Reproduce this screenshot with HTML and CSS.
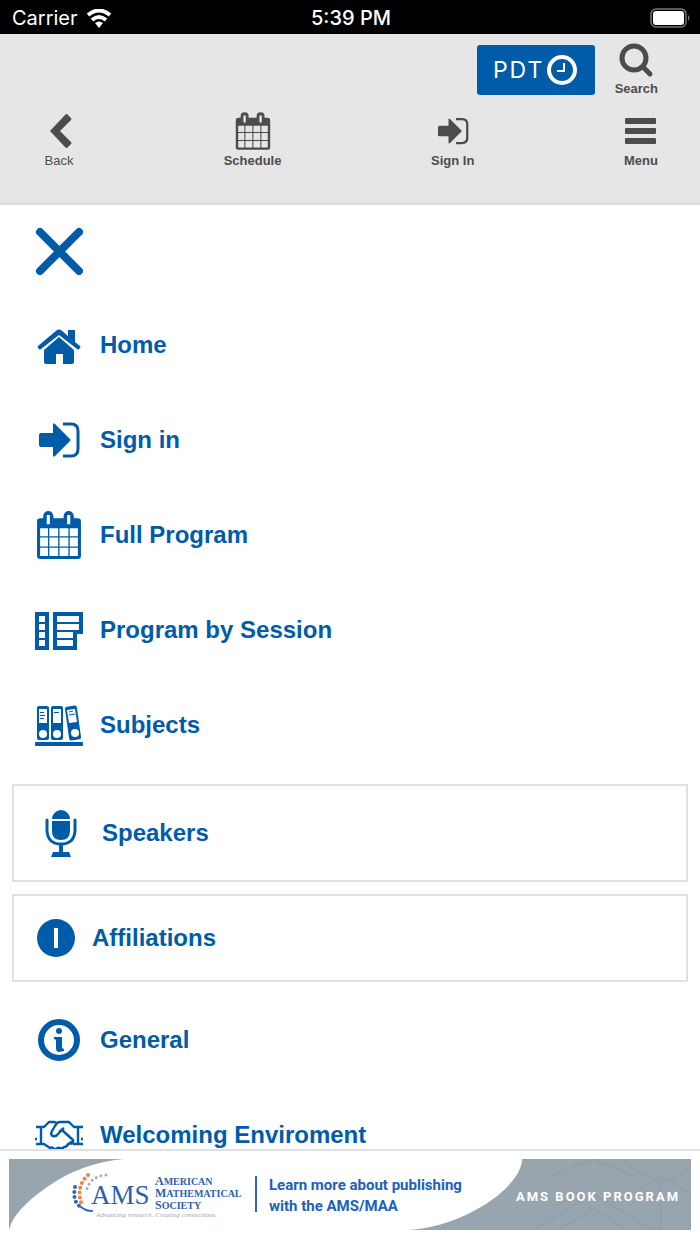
FILE: index.html
```
<!DOCTYPE html>
<html lang="en">

<head>
    <meta charset="UTF-8">
    <meta name="viewport" content="width=device-width, initial-scale=1.0">
    <title>Conference Program</title>
    <link rel="stylesheet" href="styles.css">
</head>

<body>
    <!-- Shared icons -->
    <svg class="sprite" aria-hidden="true">
        <symbol id="calendar" viewBox="1 0 45 47">
            <path fill="currentColor" fill-rule="evenodd" d="M5 7H8V5a5 5 0 0 1 10 0v2h10V5a5 5 0 0 1 10 0v2h4a3 3 0 0 1 3 3v34a3 3 0 0 1-3 3H5a3 3 0 0 1-3-3V10a3 3 0 0 1 3-3zM11.500 4v9h3V4zM31.500 4v9h3V4zM5 17v7.700h7.700V17zM14 17v7.700h8.700V17zM24 17v7.700h8.700V17zM34 17v7.700h8V17zM5 26v8.700h7.700V26zM14 26v8.700h8.700V26zM24 26v8.700h8.700V26zM34 26v8.700h8V26zM5 36v8h7.700v-8zM14 36v8h8.700v-8zM24 36v8h8.700v-8zM34 36v8h8v-8z"/>
        </symbol>
        <symbol id="signin" viewBox="0 0 48 48">
            <path fill="currentColor" d="M6 17h12V9q0-3 2-1l15 15q1 1 0 2L20 40q-2 2-2-1v-8H6q-2 0-2-2V19q0-2 2-2z"/>
            <path fill="none" stroke="currentColor" stroke-width="3" d="M28 8h8q7 0 7 7v18q0 7-7 7h-8"/>
        </symbol>
    </svg>

    <div class="status-bar">
        <div class="carrier">
            <span>Carrier</span>
            <svg width="26" height="19" viewBox="0 0 26 19" fill="none" stroke="#fff" stroke-width="4">
                <path d="M2 6Q13-3 24 6"/>
                <path d="M6 11q7-6 14 0"/>
                <path fill="#fff" stroke="none" d="M9 14q4-3 8 0l-4 5z"/>
            </svg>
        </div>
        <span class="time">5:39 PM</span>
        <svg class="battery" width="42" height="20" viewBox="0 0 42 20">
            <rect x="3" y="1" width="35" height="18" rx="5" fill="none" stroke="#777" stroke-width="1.500"/>
            <rect x="5" y="3" width="31" height="14" rx="3" fill="#fff"/>
            <path fill="#777" d="M40 7q3 3 0 6z"/>
        </svg>
    </div>

    <header class="header">
        <div class="header-top">
            <button class="timezone" type="button">
                PDT
                <svg width="32" height="32" viewBox="0 0 32 32" fill="none" stroke="#fff">
                    <circle cx="16" cy="16" r="13" stroke-width="4"/>
                    <path stroke-width="2" d="M18 9v8h-7"/>
                </svg>
            </button>
            <a class="tool" href="#search">
                <svg width="36" height="36" viewBox="0 0 36 36" fill="none" stroke="currentColor">
                    <circle cx="16" cy="16" r="12" stroke-width="5"/>
                    <path stroke-width="5" stroke-linecap="round" d="M25 25l7 7"/>
                </svg>
                <span>Search</span>
            </a>
        </div>
        <nav class="toolbar">
            <a class="tool back" href="#back">
                <svg width="30" height="40" viewBox="4 0 30 40" fill="currentColor">
                    <path d="M25 4q2-2 3 0l3 3q1 1 0 2L20 20l11 11q1 1 0 2l-3 3q-1 2-3 0L10 20z"/>
                </svg>
                <span>Back</span>
            </a>
            <a class="tool" href="#schedule">
                <svg width="36" height="40"><use href="#calendar"/></svg>
                <span>Schedule</span>
            </a>
            <a class="tool" href="#signin">
                <svg width="36" height="40"><use href="#signin"/></svg>
                <span>Sign In</span>
            </a>
            <a class="tool" href="#menu">
                <svg width="32" height="40" viewBox="0 0 32 40" fill="currentColor">
                    <rect x="0" y="7" width="31" height="6" rx="1"/>
                    <rect x="0" y="17" width="31" height="6" rx="1"/>
                    <rect x="0" y="27" width="31" height="6" rx="1"/>
                </svg>
                <span>Menu</span>
            </a>
        </nav>
    </header>

    <main class="menu">
        <button class="close" type="button" aria-label="Close menu">
            <svg width="48" height="48" viewBox="0 0 48 48" stroke="currentColor" stroke-width="8" stroke-linecap="round">
                <path d="M5 5l39 39M44 5L5 44"/>
            </svg>
        </button>
        <ul>
            <li><a href="#home">
                <svg width="48" height="48" viewBox="0 0 48 48" fill="currentColor">
                    <path d="M33 9h7v12l5 4q1 1 0 2l-1 1q-1 1-2 0L24 14 6 28q-1 1-2 0l-1-1q-1-1 0-2L22 9q2-1 4 0l7 6z"/>
                    <path d="M24 16l15 13v12q0 2-2 2H28V33h-7v10H11q-2 0-2-2V29z"/>
                </svg>
                Home
            </a></li>
            <li><a href="#signin">
                <svg width="48" height="48"><use href="#signin"/></svg>
                Sign in
            </a></li>
            <li><a href="#program">
                <svg width="48" height="48"><use href="#calendar"/></svg>
                Full Program
            </a></li>
            <li><a href="#sessions">
                <svg width="48" height="48" viewBox="0 0 48 48" fill="currentColor">
                    <path fill-rule="evenodd" d="M0 6h14v38H0zM4 10v6h6v-6zM4 18v6h6v-6zM4 26v6h6v-6zM4 34v6h6v-6zM18 6h30v22h-6v16H18zM22 10v6h22v-6zM22 18v6h22v-6zM22 26v6h16v-6zM22 34v6h16v-6z"/>
                </svg>
                Program by Session
            </a></li>
            <li><a href="#subjects">
                <svg width="48" height="48" viewBox="0 0 48 48">
                    <rect x="0" y="41" width="48" height="4" rx="1" fill="currentColor"/>
                    <g fill="currentColor">
                        <rect x="2" y="5" width="12" height="34" rx="2"/>
                        <rect x="16" y="5" width="12" height="34" rx="2"/>
                        <rect x="32" y="5" width="12" height="34" rx="2" transform="rotate(-8 38 22)"/>
                    </g>
                    <g fill="#fff">
                        <path d="M4 8h8v14H4zM18 8h8v14h-8z"/>
                        <path d="M32 9l8-1 2 13-8 1z"/>
                        <circle cx="8" cy="33" r="4"/>
                        <circle cx="22" cy="33" r="4"/>
                        <circle cx="40" cy="32" r="4"/>
                    </g>
                    <path stroke="currentColor" fill="none" d="M5 11.500h4M5 14.500h5M5 17.500h4M19 11.500h5M34 11l4-1M34 14l6-1"/>
                </svg>
                Subjects
            </a></li>
            <li class="boxed"><a href="#speakers">
                <svg width="48" height="48" viewBox="0 0 48 48" fill="currentColor">
                    <path d="M15 10a9 9 0 0 1 18 0H15zM15 12h18v10q0 9-9 9t-9-9z"/>
                    <path fill="none" stroke="currentColor" stroke-width="3" stroke-linecap="round" d="M10 11v11q1 13 14 13t14-13V11"/>
                    <path d="M22 35h4v8h6l2 5H14l2-5h6z"/>
                </svg>
                Speakers
            </a></li>
            <li class="boxed compact"><a href="#affiliations">
                <svg width="38" height="38" viewBox="0 0 38 38">
                    <circle cx="19" cy="19" r="19" fill="currentColor"/>
                    <path fill="#fff" d="M17 9h4v20h-4z"/>
                </svg>
                Affiliations
            </a></li>
            <li><a href="#general">
                <svg width="48" height="48" viewBox="0 0 48 48" fill="currentColor">
                    <circle cx="24" cy="24" r="18" fill="none" stroke="currentColor" stroke-width="6"/>
                    <circle cx="24" cy="15" r="3"/>
                    <path d="M19 21h8v10q0 2 2 2v2l-5 1q-3 0-3-4v-7q0-2-2-2z"/>
                </svg>
                General
            </a></li>
            <li><a href="#welcoming">
                <svg width="48" height="48" viewBox="0 0 48 48" fill="none" stroke="currentColor" stroke-width="2.400" stroke-linejoin="round">
                    <path d="M1 16h8l5-5h5l3 1M48 16h-9l-5-5H25q-3 0-5 4l-3 5q-2 4 1 5 3 1 5-2l4-4 11 10q1 3-2 4"/>
                    <path d="M1 33h8l6 4q2-1 3 0t3 1q2-2 4-1 3 1 4-1 3 0 4-3 3 0 3-3M38 33h10M6 16v17M43 16v17M24 21l5-4"/>
                    <path d="M0 28h2M46 28h2"/>
                </svg>
                Welcoming Enviroment
            </a></li>
        </ul>
    </main>

    <footer class="footer">
        <a href="#ams">
            <svg class="banner" viewBox="0 0 682 71">
                <path fill="#98a5ae" d="M0 0h115Q72 4 38 28 4 52 0 71z"/>
                <path fill="#98a5ae" d="M513 0h169v71H398C455 68 513 28 513 0z"/>
                <g fill="none" stroke="#8c99a3" stroke-width="2" opacity=".4">
                    <path d="M524 71l60-36 60 36M550 71l34-21 34 21M540 18l44-18 44 18M624 35l28-18 30 18M652 17v54M610 0l42 26 30-18"/>
                </g>
                <g fill="none" stroke-linecap="round">
                    <path stroke="#2c67ba" stroke-width="4" stroke-dasharray="0 5" d="M66 28q-3 15 6 20"/>
                    <path stroke="#2c67ba" stroke-width="2" d="M72 48q5 4 11 4"/>
                    <path stroke="#f08440" stroke-width="4" stroke-dasharray="0 5" d="M79 16q-13 12-6 30"/>
                    <path stroke="#a6adb6" stroke-width="3" stroke-dasharray="0 5" d="M97 16q-17 1-20 18"/>
                </g>
                <g class="ams" fill="#2c5fb0">
                    <text class="ams-logo" x="82" y="45">AMS</text>
                    <text class="ams-name" x="146" y="26"><tspan class="cap">A</tspan>MERICAN</text>
                    <text class="ams-name" x="146" y="38"><tspan class="cap">M</tspan>ATHEMATICAL</text>
                    <text class="ams-name" x="146" y="50"><tspan class="cap">S</tspan>OCIETY</text>
                </g>
                <text class="tagline" x="87" y="58">Advancing research. Creating connections.</text>
                <path stroke="#2c67ba" stroke-width="2" d="M247 17v36"/>
                <text class="pitch" x="260" y="31">Learn more about publishing</text>
                <text class="pitch" x="260" y="52">with the AMS/MAA</text>
                <text class="program" x="507" y="42">AMS BOOK PROGRAM</text>
            </svg>
        </a>
    </footer>
</body>

</html>
```
FILE: styles.css
```
/* Global Styles */
* {
    box-sizing: border-box;
    margin: 0;
    padding: 0;
}

body {
    display: flex;
    flex-direction: column;
    height: 100vh;
    overflow: hidden;
    font-family: "Liberation Sans", Arial, sans-serif;
    background: #fff;
    color: #4c4c4c;
}

a {
    color: inherit;
    text-decoration: none;
}

button {
    border: none;
    cursor: pointer;
}

svg {
    display: block;
    flex-shrink: 0;
}

.sprite {
    position: absolute;
    width: 0;
    height: 0;
}

/* Status Bar */
.status-bar {
    flex-shrink: 0;
    display: grid;
    grid-template-columns: 1fr auto 1fr;
    align-items: center;
    height: 34px;
    padding: 0 10px 0 12px;
    background: #000;
    color: #fff;
    font-family: Inter, sans-serif;
    font-size: 20px;
    line-height: 36px;
}

.carrier {
    display: flex;
    align-items: center;
    gap: 8px;
}

.time {
    font-weight: 500;
}

.battery {
    justify-self: end;
}

/* Header */
.header {
    flex-shrink: 0;
    height: 171px;
    padding: 8px 42px 0 44px;
    background: #e6e6e6;
    border-bottom: 2px solid #dcdcdc;
}

.header-top {
    display: flex;
    justify-content: flex-end;
    align-items: center;
    gap: 20px;
}

.timezone {
    display: flex;
    align-items: center;
    justify-content: center;
    gap: 2px;
    width: 118px;
    height: 50px;
    border-radius: 3px;
    background: #005ca9;
    color: #fff;
    font-family: Inter, sans-serif;
    font-size: 23px;
    letter-spacing: 2px;
}

.tool {
    display: flex;
    flex-direction: column;
    align-items: center;
    gap: 3px;
    font-size: 13px;
    font-weight: bold;
    line-height: 16px;
}

.toolbar {
    display: flex;
    justify-content: space-between;
    margin-top: 14px;
}

.toolbar .tool {
    gap: 2px;
}

.toolbar .back {
    font-weight: normal;
}

/* Menu */
.menu {
    flex: 1;
    min-height: 0;
    overflow: hidden;
    color: #005ca9;
}

.close {
    display: flex;
    align-items: center;
    height: 92px;
    padding-left: 35px;
    background: none;
    color: inherit;
}

.menu ul {
    list-style: none;
}

.menu li a {
    display: flex;
    align-items: center;
    gap: 17px;
    height: 95px;
    padding-left: 35px;
    font-size: 24px;
    font-weight: bold;
}

.menu .boxed {
    margin: 12px;
    border: 2px solid #dee2e6;
}

.menu .boxed a {
    height: 94px;
    padding-left: 23px;
}

.menu .compact {
    margin-bottom: 10px;
}

.menu .compact a {
    height: 84px;
}

/* Footer Banner */
.footer {
    flex-shrink: 0;
    padding: 8px 9px 14px;
    background: #fff;
    border-top: 2px solid #dee2e6;
}

.banner {
    width: 100%;
}

.ams {
    font-family: "Liberation Serif", serif;
}

.ams-logo {
    font-size: 27px;
}

.ams-name {
    font-size: 10px;
    font-weight: bold;
}

.cap {
    font-size: 12px;
}

.tagline {
    fill: #a0a7b4;
    font-family: "Liberation Serif", serif;
    font-size: 7px;
    font-style: italic;
}

.pitch {
    fill: #2060bd;
    font-family: Roboto, sans-serif;
    font-size: 15px;
    font-weight: bold;
}

.program {
    fill: #fff;
    font-family: Roboto, sans-serif;
    font-size: 13px;
    font-weight: bold;
    letter-spacing: 2px;
}
```
